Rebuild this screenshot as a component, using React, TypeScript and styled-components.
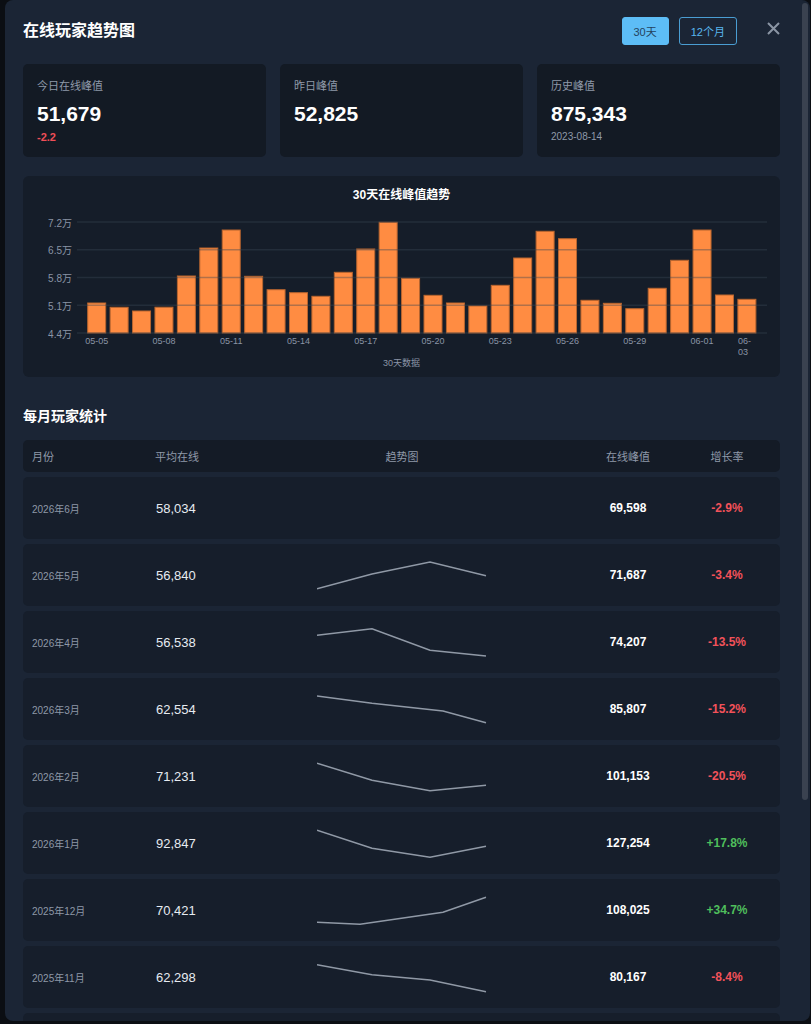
import React from "react";
import styled, { createGlobalStyle } from "styled-components";

const GlobalStyle = createGlobalStyle`
  html, body { margin: 0; padding: 0; background: #0b0e13; }
  body { font-family: "Liberation Sans", "Noto Sans CJK SC", Arial, sans-serif; }
  * { box-sizing: border-box; }
`;

const Page = styled.div`
  padding-left: 5px;
  height: 1024px;
  overflow: hidden;
`;

const Modal = styled.div`
  position: relative;
  width: 805px;
  height: 1021px;
  background: #1b2535;
  border-radius: 8px;
  overflow: hidden;
`;

const ScrollArea = styled.div`
  height: 100%;
  overflow: hidden;
  padding: 17px 30px 30px 18px;
`;

const ScrollThumb = styled.div`
  position: absolute;
  top: 3px;
  right: 2px;
  width: 6px;
  height: 797px;
  border-radius: 3px;
  background: #3a4250;
`;

const Header = styled.div`
  display: flex;
  align-items: center;
  height: 28px;
`;

const Title = styled.h1`
  margin: 0;
  flex: 1;
  font-size: 16px;
  font-weight: 700;
  color: #ffffff;
  line-height: 30px;
`;

const Tabs = styled.div`
  display: flex;
  gap: 10px;
`;

const TabButton = styled.button<{ $active?: boolean }>`
  height: 28px;
  padding: 0 11px;
  border-radius: 3px;
  font-family: inherit;
  font-size: 11px;
  border: 1px solid ${(p) => (p.$active ? "#5dbdf6" : "#4a9dd2")};
  background: ${(p) => (p.$active ? "#5dbdf6" : "transparent")};
  color: ${(p) => (p.$active ? "#24435f" : "#58b5ef")};
  cursor: pointer;
`;

const CloseButton = styled.button`
  align-self: flex-start;
  margin-left: 29px;
  width: 14px;
  height: 22px;
  padding: 0;
  border: none;
  background: none;
  display: flex;
  align-items: center;
  justify-content: center;
  cursor: pointer;
`;

const StatGrid = styled.div`
  margin-top: 19px;
  display: grid;
  grid-template-columns: repeat(3, 1fr);
  gap: 14px;
`;

const StatCard = styled.div`
  background: #131a24;
  border-radius: 5px;
  padding: 14px 14px 13px;
  height: 93px;
`;

const StatLabel = styled.div`
  font-size: 11px;
  line-height: 16px;
  color: #8f99a9;
`;

const StatValue = styled.div`
  margin-top: 7px;
  font-size: 21px;
  font-weight: 700;
  line-height: 26px;
  color: #ffffff;
`;

const StatSub = styled.div<{ $tone: "down" | "muted" }>`
  margin-top: 3px;
  font-size: ${(p) => (p.$tone === "down" ? "11px" : "10px")};
  font-weight: ${(p) => (p.$tone === "down" ? 700 : 400)};
  line-height: 14px;
  color: ${(p) => (p.$tone === "down" ? "#ef4e57" : "#8f99a9")};
`;

const ChartCard = styled.div`
  margin-top: 19px;
  height: 201px;
  background: #151d29;
  border-radius: 6px;
  padding-top: 11px;
`;

const ChartTitle = styled.div`
  text-align: center;
  font-size: 12px;
  font-weight: 700;
  line-height: 16px;
  color: #ffffff;
`;

const ChartSvg = styled.svg`
  display: block;
`;

const SectionTitle = styled.h2`
  margin: 29px 0 14px;
  font-size: 14px;
  font-weight: 700;
  line-height: 20px;
  color: #ffffff;
`;

const columns = "123px 100px 294px 158px 40px";

const TableHead = styled.div`
  display: grid;
  grid-template-columns: ${columns};
  align-items: center;
  height: 32px;
  padding: 0 9px;
  background: #141b26;
  border-radius: 5px;
`;

const HeadCell = styled.div<{ $center?: boolean }>`
  display: flex;
  justify-content: ${(p) => (p.$center ? "center" : "flex-start")};
  font-size: 11px;
  color: #8f99a9;
  white-space: nowrap;
`;

const Row = styled.div`
  display: grid;
  grid-template-columns: ${columns};
  align-items: center;
  height: 62px;
  margin-top: 5px;
  padding: 0 9px;
  background: #161e2b;
  border-radius: 5px;
`;

const MonthCell = styled.div`
  font-size: 10px;
  color: #8e98a8;
  white-space: nowrap;
`;

const AvgCell = styled.div`
  padding-left: 1px;
  font-size: 13px;
  color: #e6ebf1;
`;

const TrendCell = styled.div`
  display: flex;
  justify-content: center;
  align-items: center;
  height: 32px;
`;

const PeakCell = styled.div`
  display: flex;
  justify-content: center;
  font-size: 12px;
  font-weight: 700;
  color: #ffffff;
  white-space: nowrap;
`;

const GrowthCell = styled.div<{ $up: boolean }>`
  display: flex;
  justify-content: center;
  font-size: 12px;
  font-weight: 700;
  color: ${(p) => (p.$up ? "#4fbf5c" : "#f2525a")};
  white-space: nowrap;
`;

const bars = [
  5.157, 5.048, 4.955, 5.05, 5.838, 6.544, 6.998, 5.83, 5.492, 5.417,
  5.326, 5.931, 6.519, 7.193, 5.78, 5.351, 5.157, 5.081, 5.603, 6.292,
  6.966, 6.779, 5.225, 5.149, 5.013, 5.528, 6.234, 6.998, 5.359, 5.25,
];

const dates = (() => {
  const out: string[] = [];
  for (let d = 5; d <= 31; d++) out.push(`05-${String(d).padStart(2, "0")}`);
  for (let d = 1; d <= 3; d++) out.push(`06-${String(d).padStart(2, "0")}`);
  return out;
})();

const yTicks = [
  { v: "7.2万", y: 19 },
  { v: "6.5万", y: 46.75 },
  { v: "5.8万", y: 74.5 },
  { v: "5.1万", y: 102.25 },
  { v: "4.4万", y: 130 },
];

function BarChart() {
  const base = 130;
  const scale = 39.64;
  return (
    <ChartSvg width={757} height={174} viewBox="0 0 757 174">
      {bars.map((v, i) => {
        const x = 64.7 + i * 22.42;
        const y = base - (v - 4.4) * scale;
        return (
          <rect
            key={i}
            x={x}
            y={y}
            width={18}
            height={base - y}
            fill="#ff8c42"
            stroke="#b8652f"
            strokeWidth={1}
          />
        );
      })}
      {yTicks.map((t) => (
        <g key={t.v}>
          <line x1={54} x2={744} y1={t.y} y2={t.y} stroke="#3a4556" strokeOpacity={0.4} strokeWidth={1.5} />
          <text x={49} y={t.y + 4.5} textAnchor="end" fontSize={10} fill="#8a94a5">
            {t.v}
          </text>
        </g>
      ))}
      {dates.map((d, i) => {
        const cx = 64.7 + i * 22.42 + 9;
        if (i === 29) {
          return (
            <text key={d} fontSize={9} fill="#8a94a5">
              <tspan x={715} y={140.5}>06-</tspan>
              <tspan x={715} y={151.5}>03</tspan>
            </text>
          );
        }
        if (i % 3 !== 0) return null;
        return (
          <text key={d} x={cx} y={140.5} textAnchor="middle" fontSize={9} fill="#8a94a5">
            {d}
          </text>
        );
      })}
      <text x={378.5} y={162.5} textAnchor="middle" fontSize={9} fill="#8a94a5">
        30天数据
      </text>
    </ChartSvg>
  );
}

type Pt = [number, number];

function Sparkline({ points }: { points: Pt[] }) {
  return (
    <svg width={170} height={32} viewBox="0 0 170 32">
      <polyline
        points={points.map((p) => p.join(",")).join(" ")}
        fill="none"
        stroke="#9099a6"
        strokeWidth={1.5}
      />
    </svg>
  );
}

type RowData = {
  month: string;
  avg: string;
  peak: string;
  growth: string;
  up: boolean;
  spark?: Pt[];
};

const rows: RowData[] = [
  { month: "2026年6月", avg: "58,034", peak: "69,598", growth: "-2.9%", up: false },
  {
    month: "2026年5月", avg: "56,840", peak: "71,687", growth: "-3.4%", up: false,
    spark: [[0, 29.7], [55, 15], [113, 3], [169, 16.7]],
  },
  {
    month: "2026年4月", avg: "56,538", peak: "74,207", growth: "-13.5%", up: false,
    spark: [[0, 9.3], [55, 2.7], [113, 24.3], [169, 30]],
  },
  {
    month: "2026年3月", avg: "62,554", peak: "85,807", growth: "-15.2%", up: false,
    spark: [[0, 3], [55, 10.3], [126, 18], [169, 29.7]],
  },
  {
    month: "2026年2月", avg: "71,231", peak: "101,153", growth: "-20.5%", up: false,
    spark: [[0, 3.3], [55, 20.3], [113, 30.7], [169, 25.3]],
  },
  {
    month: "2026年1月", avg: "92,847", peak: "127,254", growth: "+17.8%", up: true,
    spark: [[0, 3.3], [55, 21.3], [113, 30.3], [169, 19.3]],
  },
  {
    month: "2025年12月", avg: "70,421", peak: "108,025", growth: "+34.7%", up: true,
    spark: [[0, 28.3], [43, 30.3], [126, 18.3], [169, 3.3]],
  },
  {
    month: "2025年11月", avg: "62,298", peak: "80,167", growth: "-8.4%", up: false,
    spark: [[0, 3.7], [55, 13.7], [113, 19], [169, 30.7]],
  },
  {
    month: "2025年10月", avg: "68,015", peak: "87,512", growth: "+5.1%", up: true,
    spark: [[0, 25], [55, 12], [113, 3], [169, 20]],
  },
  {
    month: "2025年9月", avg: "64,720", peak: "83,264", growth: "-2.6%", up: false,
    spark: [[0, 5], [55, 18], [113, 30], [169, 14]],
  },
  {
    month: "2025年8月", avg: "66,480", peak: "85,490", growth: "+3.3%", up: true,
    spark: [[0, 30], [55, 20], [113, 9], [169, 3]],
  },
  {
    month: "2025年7月", avg: "64,350", peak: "82,760", growth: "-1.8%", up: false,
    spark: [[0, 12], [55, 3], [113, 22], [169, 30]],
  },
];

export default function App() {
  return (
    <>
      <GlobalStyle />
      <Page>
        <Modal>
          <ScrollArea>
            <Header>
              <Title>在线玩家趋势图</Title>
              <Tabs>
                <TabButton $active>30天</TabButton>
                <TabButton>12个月</TabButton>
              </Tabs>
              <CloseButton aria-label="关闭">
                <svg width={13} height={13} viewBox="0 0 13 13">
                  <path d="M1 1 L12 12 M12 1 L1 12" stroke="#8b95a4" strokeWidth={2} fill="none" />
                </svg>
              </CloseButton>
            </Header>

            <StatGrid>
              <StatCard>
                <StatLabel>今日在线峰值</StatLabel>
                <StatValue>51,679</StatValue>
                <StatSub $tone="down">-2.2</StatSub>
              </StatCard>
              <StatCard>
                <StatLabel>昨日峰值</StatLabel>
                <StatValue>52,825</StatValue>
              </StatCard>
              <StatCard>
                <StatLabel>历史峰值</StatLabel>
                <StatValue>875,343</StatValue>
                <StatSub $tone="muted">2023-08-14</StatSub>
              </StatCard>
            </StatGrid>

            <ChartCard>
              <ChartTitle>30天在线峰值趋势</ChartTitle>
              <BarChart />
            </ChartCard>

            <SectionTitle>每月玩家统计</SectionTitle>

            <TableHead>
              <HeadCell>月份</HeadCell>
              <HeadCell>平均在线</HeadCell>
              <HeadCell $center>趋势图</HeadCell>
              <HeadCell $center>在线峰值</HeadCell>
              <HeadCell $center>增长率</HeadCell>
            </TableHead>

            {rows.map((r) => (
              <Row key={r.month}>
                <MonthCell>{r.month}</MonthCell>
                <AvgCell>{r.avg}</AvgCell>
                <TrendCell>{r.spark && <Sparkline points={r.spark} />}</TrendCell>
                <PeakCell>{r.peak}</PeakCell>
                <GrowthCell $up={r.up}>{r.growth}</GrowthCell>
              </Row>
            ))}
          </ScrollArea>
          <ScrollThumb />
        </Modal>
      </Page>
    </>
  );
}
